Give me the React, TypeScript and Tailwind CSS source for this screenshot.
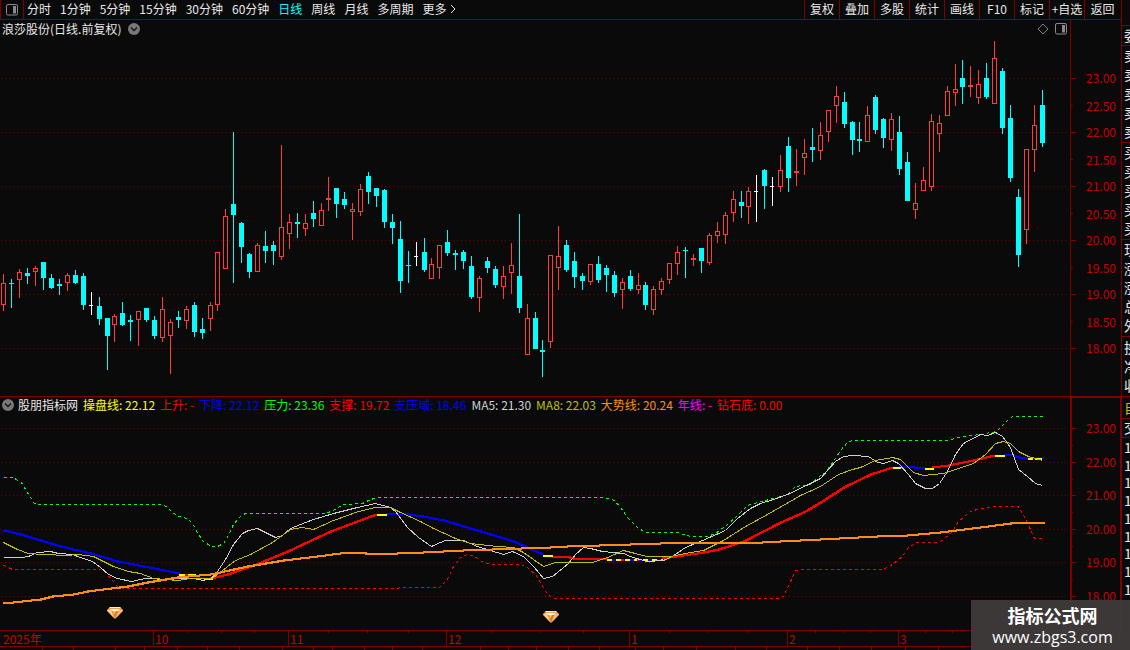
import { useState } from 'react'

// kind: r = hollow red, R = flat red, c = cyan, w = doji
// [kind, high, body top, body bottom, low]
type Candle = [string, number, number, number, number]

const candles: Candle[] = [
  ['r', 274, 283, 305, 311], ['c', 279, 283, 284, 308], ['r', 269, 272, 280, 298], ['c', 268, 273, 276, 284],
  ['r', 266, 268, 272, 286], ['c', 262, 262, 278, 290], ['c', 274, 278, 288, 289], ['c', 279, 284, 286, 295],
  ['r', 273, 275, 283, 291], ['c', 270, 275, 283, 284], ['c', 273, 276, 305, 310], ['w', 292, 305, 306, 315],
  ['c', 297, 306, 319, 325], ['c', 318, 318, 336, 370], ['r', 314, 316, 325, 342], ['c', 302, 313, 325, 326],
  ['c', 315, 320, 322, 341], ['r', 311, 311, 320, 346], ['c', 308, 308, 320, 322], ['c', 316, 320, 336, 339],
  ['r', 297, 309, 338, 342], ['r', 319, 322, 336, 374], ['c', 311, 317, 320, 328], ['r', 306, 309, 321, 329],
  ['c', 302, 305, 332, 337], ['c', 318, 329, 333, 339], ['r', 302, 305, 319, 331], ['r', 252, 252, 305, 311],
  ['r', 209, 216, 269, 269], ['c', 132, 204, 215, 283], ['c', 222, 223, 247, 263], ['c', 253, 254, 272, 278],
  ['r', 243, 245, 272, 272], ['c', 231, 246, 251, 263], ['c', 241, 245, 251, 265], ['r', 145, 227, 257, 260],
  ['r', 214, 222, 234, 249], ['c', 213, 222, 224, 238], ['r', 214, 223, 229, 236], ['c', 201, 213, 219, 227],
  ['r', 203, 210, 226, 226], ['R', 177, 198, 200, 211], ['c', 188, 188, 204, 218], ['c', 192, 199, 205, 209],
  ['r', 203, 209, 212, 240], ['r', 184, 189, 212, 216], ['c', 172, 176, 192, 204], ['c', 188, 188, 196, 207],
  ['c', 189, 190, 222, 228], ['c', 214, 222, 228, 244], ['c', 221, 239, 281, 293], ['c', 251, 265, 266, 283],
  ['w', 242, 256, 257, 266], ['c', 238, 252, 270, 272], ['r', 258, 264, 279, 279], ['r', 245, 245, 268, 279],
  ['c', 230, 242, 253, 256], ['c', 250, 253, 255, 270], ['c', 250, 252, 261, 269], ['c', 256, 266, 297, 299],
  ['r', 276, 278, 298, 312], ['c', 257, 261, 268, 273], ['c', 266, 269, 285, 288], ['r', 266, 276, 287, 299],
  ['r', 243, 265, 273, 294], ['c', 214, 276, 308, 313], ['r', 304, 318, 355, 355], ['c', 312, 318, 349, 349],
  ['c', 340, 350, 352, 377], ['r', 255, 255, 342, 348], ['r', 226, 256, 268, 290], ['c', 240, 245, 270, 272],
  ['c', 252, 261, 277, 288], ['c', 273, 276, 281, 290], ['r', 264, 264, 282, 285], ['c', 256, 264, 280, 283],
  ['c', 265, 268, 275, 292], ['c', 271, 275, 293, 297], ['r', 278, 282, 290, 309], ['c', 270, 276, 289, 291],
  ['r', 273, 285, 290, 294], ['c', 282, 285, 305, 310], ['r', 286, 289, 310, 315], ['r', 278, 281, 290, 295],
  ['r', 263, 263, 280, 284], ['r', 246, 252, 264, 275], ['c', 247, 250, 251, 278], ['R', 254, 258, 260, 266],
  ['c', 248, 248, 261, 273], ['r', 233, 235, 263, 265], ['r', 222, 231, 236, 243], ['r', 212, 215, 235, 244],
  ['r', 191, 199, 213, 222], ['c', 191, 202, 206, 218], ['r', 187, 191, 207, 224], ['w', 175, 191, 192, 222],
  ['c', 169, 170, 186, 209], ['w', 177, 186, 187, 206], ['r', 155, 170, 187, 192], ['c', 137, 146, 178, 192],
  ['R', 149, 171, 173, 186], ['r', 139, 153, 158, 175], ['c', 128, 147, 150, 162], ['r', 122, 135, 151, 160],
  ['r', 110, 110, 132, 142], ['r', 86, 96, 106, 123], ['c', 92, 102, 124, 128], ['c', 121, 122, 140, 155],
  ['c', 122, 139, 141, 152], ['r', 106, 115, 142, 142], ['c', 95, 97, 130, 134], ['c', 118, 119, 138, 148],
  ['r', 113, 119, 140, 151], ['c', 116, 132, 169, 175], ['c', 152, 162, 201, 201], ['r', 183, 203, 210, 219],
  ['r', 167, 180, 191, 191], ['r', 114, 121, 187, 191], ['r', 115, 123, 134, 152], ['r', 86, 91, 116, 116],
  ['r', 64, 89, 93, 106], ['c', 60, 78, 87, 104], ['R', 66, 85, 87, 97], ['r', 70, 84, 98, 104],
  ['c', 63, 78, 97, 99], ['r', 41, 58, 104, 104], ['c', 68, 71, 128, 134], ['c', 105, 118, 178, 182],
  ['c', 189, 197, 255, 267], ['r', 149, 149, 230, 244], ['r', 105, 125, 150, 172], ['c', 90, 105, 143, 147],
]

const CANDLE_STEP = 7.9255

const periods = ['分时', '1分钟', '5分钟', '15分钟', '30分钟', '60分钟', '日线', '周线', '月线', '多周期']
const tools = ['复权', '叠加', '多股', '统计', '画线', 'F10', '标记', '+自选', '返回']

const legend = [
  { name: '操盘线', value: '22.12', color: 'text-[#ffff00]' },
  { name: '上升', value: '-', color: 'text-[#ff0000]' },
  { name: '下降', value: '22.12', color: 'text-[#0000ff]' },
  { name: '压力', value: '23.36', color: 'text-[#00ff00]' },
  { name: '支撑', value: '19.72', color: 'text-[#ff0000]' },
  { name: '支压域', value: '18.46', color: 'text-[#0000ff]' },
  { name: 'MA5', value: '21.30', color: 'text-[#d0d0d0]' },
  { name: 'MA8', value: '22.03', color: 'text-[#c0c000]' },
  { name: '大势线', value: '20.24', color: 'text-[#ff8c1a]' },
  { name: '年线', value: '-', color: 'text-[#ff00ff]' },
  { name: '钻石底', value: '0.00', color: 'text-[#ff0000]' },
]

const priceGrid = [78, 132, 186, 240, 294, 348]
const priceLabels = [
  { y: 78, text: '23.00' }, { y: 106, text: '22.50' }, { y: 132, text: '22.00' }, { y: 160, text: '21.50' },
  { y: 186, text: '21.00' }, { y: 214, text: '20.50' }, { y: 240, text: '20.00' }, { y: 268, text: '19.50' },
  { y: 294, text: '19.00' }, { y: 322, text: '18.50' }, { y: 348, text: '18.00' },
]
const indicatorLabels = [
  { y: 428, text: '23.00' }, { y: 462, text: '22.00' }, { y: 495, text: '21.00' },
  { y: 529, text: '20.00' }, { y: 562, text: '19.00' }, { y: 596, text: '18.00' },
]

const resistance =
  '3,477 12,477 16,479 21,482 25,489 30,497 34,503 37,504 162,504 167,507 172,512 178,516 187,518 192,523 198,534 203,541 211,546 217,546 223,543 228,535 233,524 241,515 245,513 325,513 333,510 343,504 362,503 370,499 378,497 603,497 614,500 620,507 628,518 638,528 646,532 677,532 690,536 707,536 715,533 727,524 737,515 747,505 757,502 773,498 787,494 795,486 810,484 820,475 825,472 830,465 835,458 840,450 847,442 852,440 947,440 962,436 980,434 996,431 1010,417 1013,416 1042,416'
const support =
  '3,565 8,567 12,569 100,569 105,572 112,580 118,587 125,588 397,588 400,587 439,587 447,579 453,566 460,557 467,554 474,556 483,562 490,564 520,564 527,567 535,574 540,582 547,594 553,598 780,598 782,597 787,588 795,570 800,569 883,569 892,564 902,556 908,547 917,542 938,542 943,539 952,531 958,521 970,511 980,508 993,506 1018,506 1025,518 1034,538 1041,538'
const ma5 =
  '3,557 22,557 28,556 37,552 50,551 58,553 72,554 80,557 92,561 100,567 108,574 117,578 131,581 145,578 167,579 180,578 193,578 203,580 210,578 215,574 219,568 225,559 233,544 242,533 248,530 257,528 265,532 275,537 282,535 290,528 300,524 313,519 333,513 357,507 375,503 390,507 395,511 407,527 418,537 431,546 440,542 445,540 463,540 477,546 490,550 503,554 512,551 523,556 534,567 543,578 552,576 568,563 575,554 583,547 590,548 602,551 623,553 630,556 646,561 663,560 672,556 685,547 702,540 725,530 737,518 750,508 760,503 773,499 787,494 808,484 820,478 828,469 835,461 843,456 852,455 868,456 877,462 883,463 892,460 898,463 908,474 915,483 925,488 932,488 939,483 947,471 955,454 963,443 980,434 987,435 995,432 1002,436 1010,447 1018,469 1027,476 1035,483 1042,485'
const ma8 =
  '3,542 17,549 28,553 43,554 67,555 77,554 93,556 103,561 113,566 128,571 140,573 153,578 177,580 190,578 212,578 218,573 235,560 250,554 272,542 290,529 302,527 313,529 333,520 358,511 375,507 390,507 400,512 420,521 433,528 455,538 470,543 497,546 513,547 523,552 533,559 543,566 555,562 592,562 607,557 623,550 635,553 646,556 670,556 685,553 703,550 723,540 745,526 767,514 800,495 820,486 838,474 852,469 860,467 875,460 892,457 900,459 913,472 923,475 943,473 973,463 985,454 995,443 1003,441 1010,443 1018,451 1028,456 1042,460'
const trend =
  '3,603 40,599 52,596 73,594 87,591 127,586 147,582 177,577 210,574 247,566 283,560 317,556 347,552 360,552 370,554 423,552 463,550 550,547 567,546 630,544 690,542 707,542 743,543 780,541 820,539 877,536 907,535 940,532 980,527 1010,523 1027,522 1043,522'

// the main line changes colour with its direction: red up, blue down, yellow at a turn
const mainLine = [
  { color: '#0000ff', points: '3,530 20,534 40,540 60,546 90,553 117,561 143,566 179,573' },
  { color: '#ffff00', points: '178,574 184,574' },
  { color: '#ff0000', points: '184,574 188,574' },
  { color: '#ffff00', points: '188,574 194,575' },
  { color: '#0000ff', points: '195,577 203,577' },
  { color: '#ff0000', points: '210,578 227,574 253,565 287,551 330,531 370,516 376,514' },
  { color: '#ffff00', points: '203,578 211,578' },
  { color: '#0000ff', points: '385,513 400,513 422,516 443,520 463,526 490,534 513,541 542,554' },
  { color: '#ffff00', points: '376,514 385,514' },
  { color: '#ff0000', points: '551,556 565,556 573,558 606,558' },
  { color: '#ffff00', points: '542,555 551,555' },
  { color: '#0000ff', points: '606,559 662,559' },
  { color: '#ff0000', points: '662,558 703,552 718,549 743,541 780,522 803,512 820,502 843,487 870,474 892,467' },
  { color: '#0000ff', points: '899,466 913,467 924,468' },
  { color: '#ffff00', points: '892,467 899,467' },
  { color: '#ff0000', points: '932,467 948,465 977,459 994,455' },
  { color: '#ffff00', points: '924,468 932,468' },
  { color: '#0000ff', points: '1003,454 1010,454 1018,457 1043,458' },
  { color: '#ffff00', points: '994,455 1003,455' },
  { color: '#ffff00', points: '1027,458 1031,458' },
  { color: '#ffff00', points: '1034,458 1040,458' },
]

const monthTicks = [187, 221, 254, 328, 367, 408, 492, 539, 583, 669, 708, 748, 815, 843, 870, 925, 952]
const footerTicks = [
  42, 73, 115, 144, 177, 207, 239, 282, 313, 332, 364, 392, 422, 480, 508, 536, 568, 599, 635, 663, 696, 735, 766,
  807, 839, 871, 905, 938,
]

const quoteGroups = [
  { rows: ['委'], cls: 'h-5' },
  { rows: ['卖', '卖', '卖', '卖', '卖'], cls: 'h-[97px]' },
  { rows: ['买', '买', '买', '买', '买'], cls: 'h-[97px]' },
  { rows: ['现', '涨', '涨', '总', '外'], cls: 'h-[97px]' },
  { rows: ['换', '净', '收'], cls: 'h-[60px]' },
  { rows: ['自'], cls: 'h-[22px] text-[#c0c000]' },
  { rows: ['交'], cls: 'h-[19px]' },
  { rows: ['1', '1', '1', '1', '1', '1', '1', '1', '1'], cls: 'h-[163px]' },
]

function PanelIcon() {
  return (
    <svg className="h-3 w-3" viewBox="0 0 12 12" fill="none">
      <rect x="0.5" y="0.5" width="11" height="10.5" rx="1.5" stroke="#8a8a8a" />
      <rect x="7" y="2" width="3" height="7.5" fill="#8a8a8a" />
    </svg>
  )
}

function RoundToggle({ label }: { label: string }) {
  return (
    <button aria-label={label} className="shrink-0">
      <svg className="h-3 w-3" viewBox="0 0 12 12" fill="none">
        <circle cx="6" cy="6" r="6" fill="#787878" />
        <path d="M3 4.5 6 7.5 9 4.5" stroke="#141414" strokeWidth="1.4" />
      </svg>
    </button>
  )
}

function Diamond({ x, y }: { x: number; y: number }) {
  return (
    <g transform={`translate(${x} ${y})`}>
      <path d="M3 0H13L16 3V4L8 12 0 4V3Z" fill="#f0a050" />
      <path d="M3 0H13L14 1H2Z" fill="#ffe9b8" />
      <path d="M3 2H13L11 4H5Z" fill="#fff2d8" />
      <path d="M0 3H4L7 11Z" fill="#ffd08c" />
      <path d="M5 4H11L8 11Z" fill="#e07818" />
      <path d="M6 4H9L7 8Z" fill="#ffc478" />
      <path d="M12 3H16L9 11Z" fill="#f8bc74" />
    </g>
  )
}

function GridLines({ rows }: { rows: number[] }) {
  return (
    <g stroke="#800000" strokeDasharray="1 3">
      {rows.map((y) => (
        <line key={y} x1="1" x2="1067" y1={y + 0.5} y2={y + 0.5} />
      ))}
    </g>
  )
}

function CandleMark({ index, candle }: { index: number; candle: Candle }) {
  const [kind, high, top, bottom, low] = candle
  const x = 3 + Math.ceil(index * CANDLE_STEP)
  if (kind === 'r') {
    return (
      <g fill="#ff3c3c">
        <rect x={x} y={high} width="1" height={top - high} />
        <rect x={x} y={bottom} width="1" height={low - bottom} />
        <rect x={x - 1.5} y={top + 0.5} width="4" height={bottom - top - 1} fill="none" stroke="#ff3c3c" />
      </g>
    )
  }
  const color = kind === 'c' ? '#00ffff' : kind === 'w' ? '#ffffff' : '#ff3c3c'
  return (
    <g fill={color}>
      <rect x={x} y={high} width="1" height={low - high} />
      <rect x={x - 2} y={top} width={kind === 'w' ? 4 : 5} height={bottom - top} />
    </g>
  )
}

// square 2px pen, so slopes come out heavier than flats
function PenLine({ points, color }: { points: string; color: string }) {
  return (
    <g stroke={color} strokeWidth="2">
      <polyline points={points} />
      <polyline points={points} transform="translate(1 0)" />
    </g>
  )
}

function AxisLabels({ labels }: { labels: { y: number; text: string }[] }) {
  return (
    <>
      {labels.map((label) => (
        <text key={label.y} x="15" y={label.y + 5} fill="#c80000" className="text-[12px]">
          {label.text}
        </text>
      ))}
    </>
  )
}

export default function App() {
  const [period, setPeriod] = useState('日线')

  return (
    <div className="relative flex min-h-screen overflow-hidden bg-[#0a0a0a] font-['Noto_Sans_CJK_SC',sans-serif] text-[12px] leading-4 text-[#e8e8e8]">
      <div className="flex min-w-0 flex-1 flex-col">
        <nav className="flex h-5 items-stretch justify-between border-b border-[#800000]">
          <div className="flex items-center">
            <button aria-label="侧栏" className="flex h-full w-6 items-center justify-center border-x border-[#800000]">
              <PanelIcon />
            </button>
            <div className="flex items-center gap-[9px] pb-[2px] pl-[3px] whitespace-nowrap">
              {periods.map((name) => (
                <button
                  key={name}
                  onClick={() => setPeriod(name)}
                  className={name === period ? 'text-[#00ffff]' : 'text-[#e8e8e8]'}
                >
                  {name}
                </button>
              ))}
              <button className="flex items-center gap-1">
                更多
                <svg className="h-2 w-[6px]" viewBox="0 0 6 8" fill="none">
                  <path d="M1 0 5 4 1 8" stroke="#e8e8e8" />
                </svg>
              </button>
            </div>
          </div>
          <div className="flex whitespace-nowrap">
            {tools.map((name) => (
              <button key={name} className="w-[35px] border-l border-[#800000] pb-[2px] last:w-[37px] last:pr-px">
                {name}
              </button>
            ))}
          </div>
        </nav>

        <section className="flex h-[376px]">
          <div className="flex min-w-0 flex-1 flex-col">
            <header className="flex h-5 items-center justify-between pr-[3px] pb-[2px] pl-[2px]">
              <div className="flex items-center gap-[7px]">
                <h1>浪莎股份(日线.前复权)</h1>
                <RoundToggle label="展开" />
              </div>
              <div className="flex items-center gap-[6px]">
                <svg className="h-3 w-3" viewBox="0 0 12 12" fill="none">
                  <path d="M6 1 11 6 6 11 1 6Z" stroke="#808080" />
                </svg>
                <PanelIcon />
              </div>
            </header>
            <svg
              className="h-[356px] w-full"
              viewBox="0 40 1070 356"
              preserveAspectRatio="none"
              shapeRendering="crispEdges"
            >
              <GridLines rows={priceGrid} />
              {candles.map((candle, i) => (
                <CandleMark key={i} index={i} candle={candle} />
              ))}
            </svg>
          </div>
          <div className="w-[51px] shrink-0 border-l border-[#800000]">
            <svg className="h-[376px] w-[50px]" viewBox="0 20 50 376">
              <g fill="#800000">
                {priceLabels.map((label, i) => (
                  <rect key={label.y} x="0" y={78 + i * 27} width={i % 2 ? 2 : 5} height="1" />
                ))}
              </g>
              <AxisLabels labels={priceLabels} />
            </svg>
          </div>
        </section>

        <section className="flex h-[234px]">
          <div className="flex min-w-0 flex-1 flex-col border-t border-[#800000]">
            <header className="flex h-[17px] items-center gap-[5px] pb-[2px] pl-[2px] whitespace-nowrap">
              <div className="flex items-center gap-1">
                <RoundToggle label="指标菜单" />
                <h2>股朋指标网</h2>
              </div>
              {legend.map((item) => (
                <span key={item.name} className={item.color}>
                  {item.name}: {item.value}
                </span>
              ))}
            </header>
            <svg
              className="h-[216px] w-full"
              viewBox="0 414 1070 216"
              preserveAspectRatio="none"
              shapeRendering="crispEdges"
              fill="none"
            >
              <GridLines rows={indicatorLabels.map((label) => label.y)} />
              <g transform="translate(0.5 0.5)">
                <polyline points={resistance} stroke="#00ff00" strokeDasharray="3 3" />
                <polyline points={support} stroke="#ff0000" strokeDasharray="3 3" />
                {mainLine.map((part, i) => (
                  <PenLine key={i} points={part.points} color={part.color} />
                ))}
                <polyline points="606,559 662,559" stroke="#ffff00" strokeWidth="2" strokeDasharray="5 4" />
                <polyline points="620,559 623,559" stroke="#ff0000" strokeWidth="2" />
                <polyline points="636,559 638,559" stroke="#ff0000" strokeWidth="2" />
                <polyline points={ma5} stroke="#d0d0d0" />
                <polyline points={ma8} stroke="#c0c000" />
                <PenLine points={trend} color="#ff8c1a" />
              </g>
              <g shapeRendering="auto">
                <Diamond x={107} y={607} />
                <Diamond x={543} y={611} />
              </g>
            </svg>
          </div>
          <div className="w-[51px] shrink-0 border-t-2 border-r border-l-2 border-[#800000]">
            <svg className="h-[232px] w-12" viewBox="1 398 48 232">
              <g fill="#800000">
                {indicatorLabels.map((label) => (
                  <rect key={label.y} x="1" y={label.y} width="4" height="1" />
                ))}
                {indicatorLabels.map((label) => (
                  <rect key={label.y} x="1" y={label.y + 17} width="1" height="1" />
                ))}
              </g>
              <AxisLabels labels={indicatorLabels} />
            </svg>
          </div>
        </section>

        <footer className="relative flex-1 overflow-hidden">
          <svg
            className="absolute inset-0 h-5 w-full"
            viewBox="0 630 1121 20"
            preserveAspectRatio="none"
            fill="#800000"
          >
            {monthTicks.map((x) => (
              <rect key={x} x={x} y="631" width="1" height="2" />
            ))}
            {footerTicks.map((x) => (
              <rect key={x} x={x} y="647" width="1" height="3" />
            ))}
          </svg>
          <div className="grid h-[17px] grid-cols-[153fr_135fr_158fr_183fr_158fr_111fr_223fr] items-center border-y border-[#800000] text-[#c80000]">
            <span className="pl-[3px]">2025年</span>
            <span className="border-l border-[#800000] pl-px">10</span>
            <span className="border-l border-[#800000] pl-px">11</span>
            <span className="border-l border-[#800000] pl-px">12</span>
            <span className="border-l border-[#800000] pl-px">1</span>
            <span className="border-l border-[#800000] pl-px">2</span>
            <span className="border-l border-[#800000] pl-px">3</span>
          </div>
        </footer>
      </div>

      <aside className="w-[9px] shrink-0 overflow-hidden border-l border-[#800000] pt-[25px] text-[14px]">
        {quoteGroups.map((group, i) => (
          <div key={i} className={`flex flex-col justify-around border-t border-[#800000] pb-[2px] pl-[2px] ${group.cls}`}>
            {group.rows.map((row, j) => (
              <span key={j} className="w-4">
                {row}
              </span>
            ))}
          </div>
        ))}
      </aside>

      <div className="absolute right-0 bottom-0 flex h-[50px] w-[159px] flex-col items-center justify-center bg-[#3f3b3b]/95 pl-1 text-white">
        <span className="text-[18px] leading-6 font-bold">指标公式网</span>
        <a href="#" className="font-['Open_Sans',sans-serif] text-[16px] leading-5">
          www.zbgs3.com
        </a>
      </div>
    </div>
  )
}
